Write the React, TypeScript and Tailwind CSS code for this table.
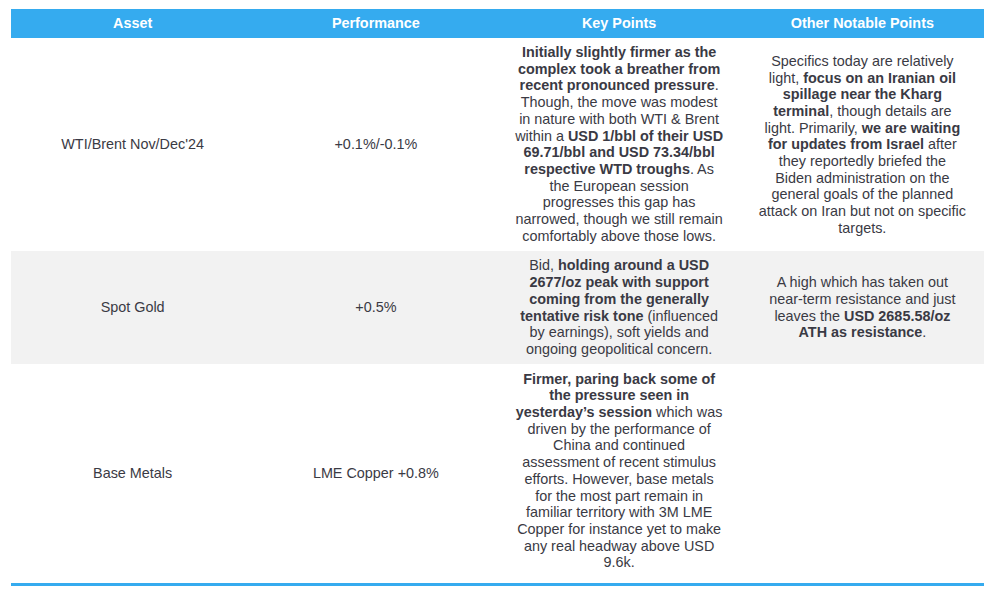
import React from "react";

type Seg = string | { b: string };
type Line = Seg[];

const L = (...s: Seg[]): Line => s;
const b = (t: string) => ({ b: t });

type Row = {
  asset: string;
  perf: string;
  key: Line[];
  other: Line[];
  bg: string;
  pad: string;
};

const rows: Row[] = [
  {
    asset: "WTI/Brent Nov/Dec'24",
    perf: "+0.1%/-0.1%",
    bg: "bg-white",
    pad: "pt-[6px] pb-[7px]",
    key: [
      L(b("Initially slightly firmer as the")),
      L(b("complex took a breather from")),
      L(b("recent pronounced pressure"), "."),
      L("Though, the move was modest"),
      L("in nature with both WTI & Brent"),
      L("within a ", b("USD 1/bbl of their USD")),
      L(b("69.71/bbl and USD 73.34/bbl")),
      L(b("respective WTD troughs"), ". As"),
      L("the European session"),
      L("progresses this gap has"),
      L("narrowed, though we still remain"),
      L("comfortably above those lows."),
    ],
    other: [
      L("Specifics today are relatively"),
      L("light, ", b("focus on an Iranian oil")),
      L(b("spillage near the Kharg")),
      L(b("terminal"), ", though details are"),
      L("light. Primarily, ", b("we are waiting")),
      L(b("for updates from Israel"), " after"),
      L("they reportedly briefed the"),
      L("Biden administration on the"),
      L("general goals of the planned"),
      L("attack on Iran but not on specific"),
      L("targets."),
    ],
  },
  {
    asset: "Spot Gold",
    perf: "+0.5%",
    bg: "bg-[#f2f2f2]",
    pad: "py-[6px]",
    key: [
      L("Bid, ", b("holding around a USD")),
      L(b("2677/oz peak with support")),
      L(b("coming from the generally")),
      L(b("tentative risk tone"), " (influenced"),
      L("by earnings), soft yields and"),
      L("ongoing geopolitical concern."),
    ],
    other: [
      L("A high which has taken out"),
      L("near-term resistance and just"),
      L("leaves the ", b("USD 2685.58/oz")),
      L(b("ATH as resistance"), "."),
    ],
  },
  {
    asset: "Base Metals",
    perf: "LME Copper +0.8%",
    bg: "bg-white",
    pad: "pt-[7px] pb-[12px]",
    key: [
      L(b("Firmer, paring back some of")),
      L(b("the pressure seen in")),
      L(b("yesterday’s session"), " which was"),
      L("driven by the performance of"),
      L("China and continued"),
      L("assessment of recent stimulus"),
      L("efforts. However, base metals"),
      L("for the most part remain in"),
      L("familiar territory with 3M LME"),
      L("Copper for instance yet to make"),
      L("any real headway above USD"),
      L("9.6k."),
    ],
    other: [],
  },
];

function Lines({ lines }: { lines: Line[] }) {
  return (
    <div className="flex flex-col items-center">
      {lines.map((ln, i) => (
        <div key={i} className="whitespace-pre">
          {ln.map((s, j) =>
            typeof s === "string" ? (
              <span key={j}>{s}</span>
            ) : (
              <span key={j} className="font-bold">
                {s.b}
              </span>
            )
          )}
        </div>
      ))}
    </div>
  );
}

export default function App() {
  return (
    <div
      className="w-[992px] h-[599px] bg-white pt-[9px] pl-[11px] text-[#3a3a44]"
      style={{ fontFamily: '"Liberation Sans", Arial, sans-serif' }}
    >
      <div className="w-[973px]">
        <div className="grid grid-cols-4 h-[29px] bg-[#35abef] text-white font-bold text-[14.4px] items-center text-center">
          <div>Asset</div>
          <div>Performance</div>
          <div>Key Points</div>
          <div>Other Notable Points</div>
        </div>
        {rows.map((r, i) => (
          <div key={i} className={`grid grid-cols-4 ${r.bg} text-[14.4px] leading-[16.7px] text-center`}>
            <div className="flex items-center justify-center px-[8px]">{r.asset}</div>
            <div className="flex items-center justify-center px-[8px]">{r.perf}</div>
            <div className={`flex items-center justify-center px-[4px] ${r.pad}`}>
              <Lines lines={r.key} />
            </div>
            <div className="flex items-center justify-center px-[4px] py-[6px]">
              <Lines lines={r.other} />
            </div>
          </div>
        ))}
        <div className="h-[3px] bg-[#35abef]" />
      </div>
    </div>
  );
}
